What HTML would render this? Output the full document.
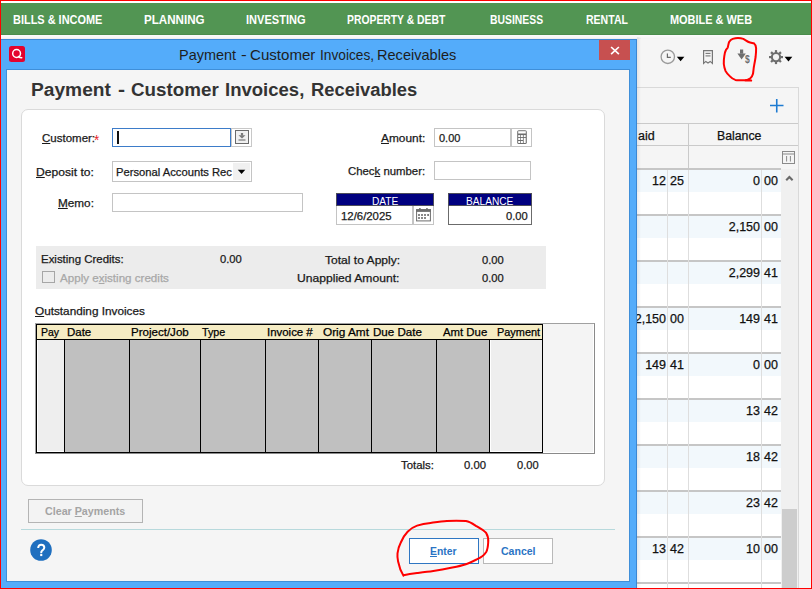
<!DOCTYPE html>
<html><head><meta charset="utf-8">
<style>
*{box-sizing:border-box;margin:0;padding:0}
html,body{width:812px;height:589px;overflow:hidden;background:#f5f5f5;font-family:"Liberation Sans",sans-serif;color:#1a1a1a;position:relative}
.a{position:absolute}
.t{position:absolute;line-height:1;white-space:pre}
.s{-webkit-text-stroke:0.25px currentColor}
u{text-decoration:underline;text-underline-offset:1px;text-decoration-thickness:1px}
</style></head><body>
<div class="a" style="left:0px;top:0px;width:812px;height:3px;background:#fff;"></div>
<div class="a" style="left:0px;top:3px;width:812px;height:32px;background:#529553;"></div>
<div class="a" style="left:0px;top:34px;width:812px;height:1px;background:#4a8c4c;"></div>
<div class="a" style="left:0px;top:35px;width:812px;height:4px;background:linear-gradient(#fbfbfb,#f3f3f3);"></div>
<div class="t" style="left:12.59px;top:13.72px;font-size:12.5px;color:#fff;transform:scaleX(0.8759);transform-origin:0 0;font-weight:700;">BILLS &amp; INCOME</div>
<div class="t" style="left:144.45px;top:13.72px;font-size:12.5px;color:#fff;transform:scaleX(0.9280);transform-origin:0 0;font-weight:700;">PLANNING</div>
<div class="t" style="left:245.68px;top:13.72px;font-size:12.5px;color:#fff;transform:scaleX(0.8837);transform-origin:0 0;font-weight:700;">INVESTING</div>
<div class="t" style="left:347.33px;top:13.72px;font-size:12.5px;color:#fff;transform:scaleX(0.8293);transform-origin:0 0;font-weight:700;">PROPERTY &amp; DEBT</div>
<div class="t" style="left:490.33px;top:13.72px;font-size:12.5px;color:#fff;transform:scaleX(0.8303);transform-origin:0 0;font-weight:700;">BUSINESS</div>
<div class="t" style="left:585.72px;top:13.72px;font-size:12.5px;color:#fff;transform:scaleX(0.8422);transform-origin:0 0;font-weight:700;">RENTAL</div>
<div class="t" style="left:670.29px;top:13.72px;font-size:12.5px;color:#fff;transform:scaleX(0.8753);transform-origin:0 0;font-weight:700;">MOBILE &amp; WEB</div>
<div class="a" style="left:600px;top:87px;width:199px;height:510px;background:#f5f5f5;border:1px solid #d9d9d9"></div>
<div class="a" style="left:600px;top:123px;width:198px;height:1px;background:#cacaca;"></div>
<div class="a" style="left:600px;top:145px;width:198px;height:1px;background:#cacaca;"></div>
<div class="a" style="left:688px;top:123px;width:1px;height:46px;background:#cacaca;"></div>
<svg class="a" style="left:769px;top:98px" width="16" height="16" viewBox="0 0 16 16"><path d="M1 7.5 H14.5 M7.75 1 V14.5" stroke="#1e7bd1" stroke-width="1.6"/></svg>
<div class="t s" style="left:717.42px;top:130.29px;font-size:12.3px;color:#111;transform:scaleX(0.9994);transform-origin:0 0;">Balance</div>
<div class="t s" style="top:130.42px;font-size:12.5px;color:#111;left:638px;">aid</div>
<svg class="a" style="left:782px;top:151px" width="13" height="13" viewBox="0 0 13 13"><rect x="0.5" y="0.5" width="12" height="12" fill="none" stroke="#8a8a8a"/><rect x="0.5" y="2.5" width="12" height="1" fill="#8a8a8a"/><line x1="4.6" y1="5" x2="4.6" y2="10.5" stroke="#8a8a8a"/><line x1="8.4" y1="5" x2="8.4" y2="10.5" stroke="#8a8a8a"/></svg>
<div class="a" style="left:600px;top:168px;width:181px;height:421px;background:#fff;"></div>
<div class="a" style="left:781px;top:169px;width:17px;height:420px;background:#f0f0f0;"></div>
<div class="a" style="left:782px;top:509px;width:15px;height:80px;background:#cdcdcd;"></div>
<svg class="a" style="left:783px;top:173px" width="12" height="10" viewBox="0 0 12 10"><polyline points="3.2,7.2 6.4,4 9.6,7.2" fill="none" stroke="#6a6a6a" stroke-width="2.1"/></svg>
<div class="a" style="left:600px;top:168px;width:181px;height:2px;background:#c6c6c6;"></div>
<div class="a" style="left:600px;top:170px;width:181px;height:22px;background:#f2f8fc;"></div>
<div class="t s" style="top:175.42px;font-size:12.5px;color:#111;right:146px;text-align:right;">12</div>
<div class="t s" style="top:175.42px;font-size:12.5px;color:#111;left:670px;">25</div>
<div class="t s" style="top:175.42px;font-size:12.5px;color:#111;right:52px;text-align:right;">0</div>
<div class="t s" style="top:175.42px;font-size:12.5px;color:#111;left:764px;">00</div>
<div class="a" style="left:600px;top:214px;width:181px;height:2px;background:#c6c6c6;"></div>
<div class="a" style="left:600px;top:216px;width:181px;height:22px;background:#f2f8fc;"></div>
<div class="t s" style="top:221.42px;font-size:12.5px;color:#111;right:52px;text-align:right;">2,150</div>
<div class="t s" style="top:221.42px;font-size:12.5px;color:#111;left:764px;">00</div>
<div class="a" style="left:600px;top:260px;width:181px;height:2px;background:#c6c6c6;"></div>
<div class="a" style="left:600px;top:262px;width:181px;height:22px;background:#f2f8fc;"></div>
<div class="t s" style="top:267.42px;font-size:12.5px;color:#111;right:52px;text-align:right;">2,299</div>
<div class="t s" style="top:267.42px;font-size:12.5px;color:#111;left:764px;">41</div>
<div class="a" style="left:600px;top:306px;width:181px;height:2px;background:#c6c6c6;"></div>
<div class="a" style="left:600px;top:308px;width:181px;height:22px;background:#f2f8fc;"></div>
<div class="t s" style="top:313.42px;font-size:12.5px;color:#111;right:146px;text-align:right;">2,150</div>
<div class="t s" style="top:313.42px;font-size:12.5px;color:#111;left:670px;">00</div>
<div class="t s" style="top:313.42px;font-size:12.5px;color:#111;right:52px;text-align:right;">149</div>
<div class="t s" style="top:313.42px;font-size:12.5px;color:#111;left:764px;">41</div>
<div class="a" style="left:600px;top:352px;width:181px;height:2px;background:#c6c6c6;"></div>
<div class="a" style="left:600px;top:354px;width:181px;height:22px;background:#f2f8fc;"></div>
<div class="t s" style="top:359.42px;font-size:12.5px;color:#111;right:146px;text-align:right;">149</div>
<div class="t s" style="top:359.42px;font-size:12.5px;color:#111;left:670px;">41</div>
<div class="t s" style="top:359.42px;font-size:12.5px;color:#111;right:52px;text-align:right;">0</div>
<div class="t s" style="top:359.42px;font-size:12.5px;color:#111;left:764px;">00</div>
<div class="a" style="left:600px;top:398px;width:181px;height:2px;background:#c6c6c6;"></div>
<div class="a" style="left:600px;top:400px;width:181px;height:22px;background:#f2f8fc;"></div>
<div class="t s" style="top:405.42px;font-size:12.5px;color:#111;right:52px;text-align:right;">13</div>
<div class="t s" style="top:405.42px;font-size:12.5px;color:#111;left:764px;">42</div>
<div class="a" style="left:600px;top:444px;width:181px;height:2px;background:#c6c6c6;"></div>
<div class="a" style="left:600px;top:446px;width:181px;height:22px;background:#f2f8fc;"></div>
<div class="t s" style="top:451.42px;font-size:12.5px;color:#111;right:52px;text-align:right;">18</div>
<div class="t s" style="top:451.42px;font-size:12.5px;color:#111;left:764px;">42</div>
<div class="a" style="left:600px;top:490px;width:181px;height:2px;background:#c6c6c6;"></div>
<div class="a" style="left:600px;top:492px;width:181px;height:22px;background:#f2f8fc;"></div>
<div class="t s" style="top:497.42px;font-size:12.5px;color:#111;right:52px;text-align:right;">23</div>
<div class="t s" style="top:497.42px;font-size:12.5px;color:#111;left:764px;">42</div>
<div class="a" style="left:600px;top:536px;width:181px;height:2px;background:#c6c6c6;"></div>
<div class="a" style="left:600px;top:538px;width:181px;height:22px;background:#f2f8fc;"></div>
<div class="t s" style="top:543.42px;font-size:12.5px;color:#111;right:146px;text-align:right;">13</div>
<div class="t s" style="top:543.42px;font-size:12.5px;color:#111;left:670px;">42</div>
<div class="t s" style="top:543.42px;font-size:12.5px;color:#111;right:52px;text-align:right;">10</div>
<div class="t s" style="top:543.42px;font-size:12.5px;color:#111;left:764px;">00</div>
<div class="a" style="left:600px;top:582px;width:181px;height:2px;background:#c6c6c6;"></div>
<div class="a" style="left:667px;top:170px;width:1px;height:419px;background:#dedede;"></div>
<div class="a" style="left:688px;top:170px;width:1px;height:419px;background:#dedede;"></div>
<div class="a" style="left:761px;top:170px;width:1px;height:419px;background:#dedede;"></div>
<svg class="a" style="left:655px;top:44px" width="145" height="28" viewBox="655 44 145 28">
<circle cx="667.8" cy="56.8" r="6.7" fill="none" stroke="#9a9a9a" stroke-width="1.3"/>
<polyline points="667.4,53.6 667.4,57.4 670.8,57.4" fill="none" stroke="#6a6a6a" stroke-width="1.2"/>
<polygon points="676.8,56.8 684.4,56.8 680.6,61.3" fill="#000"/>
<path d="M703.6,50.6 H712.4 V63.4 L710.2,61.4 L708,63 L705.8,61.4 L703.6,63.4 Z" fill="none" stroke="#777" stroke-width="1.2"/>
<line x1="705.5" y1="53.4" x2="710.5" y2="53.4" stroke="#777" stroke-width="1.1"/>
<line x1="705.5" y1="55.9" x2="710.5" y2="55.9" stroke="#777" stroke-width="1.1"/>
<rect x="740" y="49.5" width="3.2" height="4.2" fill="#6e6e6e"/>
<polygon points="737.4,53.4 745.8,53.4 741.6,59.6" fill="#6e6e6e"/>
<text x="745" y="63.3" font-family="Liberation Sans" font-size="10" font-weight="bold" fill="#6e6e6e" transform="translate(745 0) scale(0.85 1) translate(-745 0)">$</text>
<g transform="translate(776,57.1)" fill="#6e6e6e">
<circle r="5.2"/>
<rect x="-1.1" y="-7" width="2.2" height="14"/><rect x="-1.1" y="-7" width="2.2" height="14" transform="rotate(45)"/><rect x="-1.1" y="-7" width="2.2" height="14" transform="rotate(90)"/><rect x="-1.1" y="-7" width="2.2" height="14" transform="rotate(135)"/>
<circle r="3.1" fill="#f4f4f4"/>
</g>
<polygon points="784.6,56.8 792.3,56.8 788.45,61.4" fill="#000"/>
</svg>
<div class="a" style="left:637px;top:37px;width:4px;height:560px;background:linear-gradient(90deg,rgba(0,0,0,0.07),rgba(0,0,0,0));"></div>
<div class="a" style="left:1px;top:38px;width:640px;height:1px;background:linear-gradient(rgba(0,0,0,0),rgba(0,0,0,0.05));"></div>
<div class="a" style="left:1px;top:39px;width:636px;height:560px;background:#54acfa;border-top:1px solid #3b87d3;border-right:1px solid #3b87d3"></div>
<svg class="a" style="left:9px;top:46px" width="16" height="16" viewBox="0 0 16 16">
<rect x="0" y="0" width="16" height="16" rx="2.5" fill="#e4032e"/>
<circle cx="7.6" cy="7.5" r="3.9" fill="none" stroke="#fff" stroke-width="1.5"/>
<path d="M9.6,10.6 Q10.8,11.7 12.7,11.8" fill="none" stroke="#fff" stroke-width="1.6" stroke-linecap="round"/>
</svg>
<div class="a" style="left:599px;top:40px;width:31px;height:20px;background:#c75050;"></div>
<svg class="a" style="left:599px;top:40px" width="31" height="20" viewBox="0 0 31 20"><path d="M12.1,7 L19.9,14.2 M19.9,7 L12.1,14.2" stroke="#fff" stroke-width="1.7"/></svg>
<div class="t" style="left:179.34px;top:47.53px;font-size:14.5px;color:#1e1e1e;transform:scaleX(0.9970);transform-origin:0 0;">Payment</div>
<div class="t" style="left:241.13px;top:47.53px;font-size:14.5px;color:#1e1e1e;transform:scaleX(1.1823);transform-origin:0 0;">-</div>
<div class="t" style="left:250.35px;top:47.53px;font-size:14.5px;color:#1e1e1e;transform:scaleX(1.0397);transform-origin:0 0;">Customer</div>
<div class="t" style="left:319.77px;top:47.53px;font-size:14.5px;color:#1e1e1e;transform:scaleX(0.9458);transform-origin:0 0;">Invoices,</div>
<div class="t" style="left:377.04px;top:47.53px;font-size:14.5px;color:#1e1e1e;transform:scaleX(1.0041);transform-origin:0 0;">Receivables</div>
<div class="a" style="left:6px;top:69px;width:624px;height:513px;background:#f5f5f5;border:1px solid #3f8fd9"></div>
<div class="t" style="left:31.45px;top:80.76px;font-size:18px;color:#333;transform:scaleX(1.0649);transform-origin:0 0;font-weight:700;">Payment</div>
<div class="t" style="left:118.25px;top:80.76px;font-size:18px;color:#333;transform:scaleX(1.1765);transform-origin:0 0;font-weight:700;">-</div>
<div class="t" style="left:131.15px;top:80.76px;font-size:18px;color:#333;transform:scaleX(1.0437);transform-origin:0 0;font-weight:700;">Customer</div>
<div class="t" style="left:224.80px;top:80.76px;font-size:18px;color:#333;transform:scaleX(1.0294);transform-origin:0 0;font-weight:700;">Invoices,</div>
<div class="t" style="left:311.01px;top:80.76px;font-size:18px;color:#333;transform:scaleX(1.0201);transform-origin:0 0;font-weight:700;">Receivables</div>
<div class="a" style="left:21px;top:109px;width:584px;height:377px;background:#fff;border:1px solid #dadada;border-radius:7px"></div>
<div class="t s" style="left:41.63px;top:133.29px;font-size:11px;color:#1a1a1a;transform:scaleX(1.0454);transform-origin:0 0;"><u>C</u>ustomer:</div>
<div class="t" style="left:93.90px;top:133.45px;font-size:14px;color:#e8262a;transform:scaleX(0.9722);transform-origin:0 0;">*</div>
<div class="t s" style="left:36.33px;top:166.59px;font-size:11px;color:#1a1a1a;transform:scaleX(1.1004);transform-origin:0 0;"><u>D</u>eposit to:</div>
<div class="t s" style="left:58.26px;top:198.19px;font-size:11px;color:#1a1a1a;transform:scaleX(1.0682);transform-origin:0 0;"><u>M</u>emo:</div>
<div class="a" style="left:112px;top:128px;width:119px;height:19px;background:#fff;border:1px solid #3d7cc9"></div>
<div class="a" style="left:117px;top:131px;width:1.5px;height:13px;background:#111;"></div>
<div class="a" style="left:231px;top:128px;width:21px;height:19px;background:#fff;border:1px solid #c8c8c8"></div>
<svg class="a" style="left:231px;top:128px" width="21" height="19" viewBox="0 0 21 19"><rect x="4.5" y="2.5" width="13" height="13" fill="#f0f0f0" stroke="#6a6a6a"/><rect x="9.9" y="5" width="2.2" height="2.5" fill="#7a7a7a"/><polygon points="7.5,7.3 14.5,7.3 11,10.6" fill="#7a7a7a"/><rect x="7.5" y="11.4" width="7" height="1.2" fill="#7a7a7a"/></svg>
<div class="a" style="left:112px;top:161px;width:140px;height:21px;background:#fff;border:1px solid #c4c4c4"></div>
<div class="t s" style="left:115.50px;top:167.29px;font-size:11px;color:#1a1a1a;transform:scaleX(1.0197);transform-origin:0 0;">Personal Accounts Rec</div>
<div class="a" style="left:233px;top:163px;width:17px;height:17px;background:#f0f0f0;"></div>
<svg class="a" style="left:233px;top:163px" width="17" height="17" viewBox="0 0 17 17"><polygon points="4.8,6.8 12.3,6.8 8.55,11" fill="#000"/></svg>
<div class="a" style="left:112px;top:193px;width:191px;height:19px;background:#fff;border:1px solid #c4c4c4"></div>
<div class="t s" style="left:381.00px;top:132.89px;font-size:11px;color:#1a1a1a;transform:scaleX(1.0794);transform-origin:0 0;"><u>A</u>mount:</div>
<div class="a" style="left:434px;top:128px;width:98px;height:19px;background:#fff;border:1px solid #c4c4c4"></div>
<div class="t s" style="top:132.69px;font-size:11px;color:#1a1a1a;left:439px;">0.00</div>
<div class="a" style="left:510px;top:129px;width:2px;height:17px;background:#c4c4c4;"></div>
<svg class="a" style="left:500px;top:124px" width="40" height="26" viewBox="0 0 40 26"><rect x="17.2" y="6.2" width="9.6" height="13.8" rx="1.6" fill="#6d6d6d"/><g fill="#fff"><rect x="18.2" y="7.2" width="7.6" height="2.3"/><rect x="18.2" y="11.1" width="2" height="2"/><rect x="20.9" y="11.1" width="2" height="2"/><rect x="23.7" y="11.1" width="2" height="2"/><rect x="18.2" y="14" width="2" height="2"/><rect x="20.9" y="14" width="2" height="2"/><rect x="18.2" y="17" width="2" height="2"/><rect x="20.9" y="17" width="2" height="2"/><rect x="23.7" y="14" width="2" height="5"/></g></svg>
<div class="t s" style="left:348.03px;top:166.19px;font-size:11px;color:#1a1a1a;transform:scaleX(1.0337);transform-origin:0 0;">Chec<u>k</u> number:</div>
<div class="a" style="left:434px;top:161px;width:97px;height:19px;background:#fff;border:1px solid #c4c4c4"></div>
<div class="a" style="left:336px;top:193px;width:98px;height:13px;background:#000080;border:1px solid #4d4d5a"></div>
<div class="t" style="left:371.69px;top:196.29px;font-size:11px;color:#fff;transform:scaleX(0.9238);transform-origin:0 0;">DATE</div>
<div class="a" style="left:336px;top:206px;width:98px;height:19px;background:#fff;border:1px solid #c4c4c4;border-top:none"></div>
<div class="t s" style="left:340.55px;top:210.59px;font-size:11px;color:#1a1a1a;transform:scaleX(1.0339);transform-origin:0 0;">12/6/2025</div>
<div class="a" style="left:412px;top:206px;width:2px;height:19px;background:#c4c4c4;"></div>
<svg class="a" style="left:405px;top:200px" width="35" height="30" viewBox="0 0 35 30"><rect x="11.6" y="9.7" width="13.8" height="11.2" fill="#fff" stroke="#6d6d6d"/><rect x="11.1" y="9.2" width="14.8" height="2.7" fill="#6d6d6d"/><rect x="14" y="8" width="1.7" height="2" rx="0.6" fill="#6d6d6d"/><rect x="21.1" y="8" width="1.7" height="2" rx="0.6" fill="#6d6d6d"/><g fill="#6d6d6d"><rect x="13.1" y="14.1" width="1.8" height="1.8"/><rect x="16.1" y="14.1" width="1.8" height="1.8"/><rect x="19.1" y="14.1" width="1.8" height="1.8"/><rect x="22.2" y="14.1" width="1.8" height="1.8"/><rect x="13.1" y="17.1" width="1.8" height="1.8"/><rect x="16.1" y="17.1" width="1.8" height="1.8"/><rect x="19.1" y="17.1" width="1.8" height="1.8"/></g></svg>
<div class="a" style="left:448px;top:193px;width:84px;height:13px;background:#000080;border:1px solid #4d4d5a"></div>
<div class="t" style="left:465.69px;top:196.29px;font-size:11px;color:#fff;transform:scaleX(0.9221);transform-origin:0 0;">BALANCE</div>
<div class="a" style="left:448px;top:206px;width:84px;height:19px;background:#fff;border:1px solid #6b6b6b;border-top:none"></div>
<div class="t s" style="left:505.55px;top:210.59px;font-size:11px;color:#1a1a1a;transform:scaleX(1.0160);transform-origin:0 0;">0.00</div>
<div class="a" style="left:36px;top:246px;width:510px;height:43px;background:#ececec;"></div>
<div class="t s" style="left:41.38px;top:254.29px;font-size:11px;color:#1a1a1a;transform:scaleX(1.0406);transform-origin:0 0;">Existing Credits:</div>
<div class="t s" style="left:219.75px;top:254.29px;font-size:11px;color:#1a1a1a;transform:scaleX(1.0209);transform-origin:0 0;">0.00</div>
<div class="a" style="left:42px;top:271px;width:13px;height:12px;background:#ececec;border:1px solid #a6a6a6"></div>
<div class="t s" style="left:60.20px;top:273.49px;font-size:11px;color:#a8a8a8;transform:scaleX(1.0538);transform-origin:0 0;">Apply e<u>x</u>isting credits</div>
<div class="t s" style="left:324.66px;top:254.59px;font-size:11px;color:#1a1a1a;transform:scaleX(1.0972);transform-origin:0 0;">Total to Apply:</div>
<div class="t s" style="left:482.45px;top:254.59px;font-size:11px;color:#1a1a1a;transform:scaleX(1.0160);transform-origin:0 0;">0.00</div>
<div class="t s" style="left:297.39px;top:273.49px;font-size:11px;color:#1a1a1a;transform:scaleX(1.1017);transform-origin:0 0;">Unapplied Amount:</div>
<div class="t s" style="left:482.45px;top:273.49px;font-size:11px;color:#1a1a1a;transform:scaleX(1.0160);transform-origin:0 0;">0.00</div>
<div class="t s" style="left:35.07px;top:306.49px;font-size:11px;color:#1a1a1a;transform:scaleX(1.0691);transform-origin:0 0;"><u>O</u>utstanding Invoices</div>
<div class="a" style="left:35px;top:323px;width:560px;height:131px;background:#f4f4f4;border-top:1px solid #a0a0a0;border-left:1px solid #a0a0a0;border-right:1px solid #8a8a8a;border-bottom:1px solid #8a8a8a;box-shadow:inset -1px -1px 0 #fff"></div>
<div class="a" style="left:36px;top:324px;width:507px;height:129px;background:#c0c0c0;border:1px solid #000"></div>
<div class="a" style="left:37px;top:325px;width:505px;height:14px;background:#f5ecc4;"></div>
<div class="a" style="left:37px;top:339px;width:505px;height:1px;background:#000;"></div>
<div class="a" style="left:37px;top:340px;width:27px;height:112px;background:#eeeeee;border-left:1px solid #fff;border-bottom:1px solid #fff"></div>
<div class="a" style="left:490px;top:340px;width:52px;height:112px;background:#eeeeee;border-left:1px solid #fff;border-bottom:1px solid #fff"></div>
<div class="a" style="left:64px;top:340px;width:1px;height:112px;background:#000;"></div>
<div class="a" style="left:129px;top:340px;width:1px;height:112px;background:#000;"></div>
<div class="a" style="left:200px;top:340px;width:1px;height:112px;background:#000;"></div>
<div class="a" style="left:265px;top:340px;width:1px;height:112px;background:#000;"></div>
<div class="a" style="left:318px;top:340px;width:1px;height:112px;background:#000;"></div>
<div class="a" style="left:371px;top:340px;width:1px;height:112px;background:#000;"></div>
<div class="a" style="left:436px;top:340px;width:1px;height:112px;background:#000;"></div>
<div class="a" style="left:489px;top:340px;width:1px;height:112px;background:#000;"></div>
<div class="t s" style="left:41.46px;top:327.29px;font-size:11px;color:#000;transform:scaleX(0.9505);transform-origin:0 0;">Pay</div>
<div class="t s" style="left:66.98px;top:327.29px;font-size:11px;color:#000;transform:scaleX(1.0442);transform-origin:0 0;">Date</div>
<div class="t s" style="left:131.38px;top:327.29px;font-size:11px;color:#000;transform:scaleX(1.0488);transform-origin:0 0;">Project/Job</div>
<div class="t s" style="left:202.49px;top:327.29px;font-size:11px;color:#000;transform:scaleX(0.9740);transform-origin:0 0;">Type</div>
<div class="t s" style="left:267.07px;top:327.29px;font-size:11px;color:#000;transform:scaleX(1.0383);transform-origin:0 0;">Invoice #</div>
<div class="t s" style="left:322.87px;top:327.29px;font-size:11px;color:#000;transform:scaleX(1.0738);transform-origin:0 0;">Orig Amt</div>
<div class="t s" style="left:373.07px;top:327.29px;font-size:11px;color:#000;transform:scaleX(1.0532);transform-origin:0 0;">Due Date</div>
<div class="t s" style="left:443.00px;top:327.29px;font-size:11px;color:#000;transform:scaleX(1.0332);transform-origin:0 0;">Amt Due</div>
<div class="t s" style="left:496.63px;top:327.29px;font-size:11px;color:#000;transform:scaleX(0.9915);transform-origin:0 0;">Payment</div>
<div class="t s" style="left:400.57px;top:460.09px;font-size:11px;color:#1a1a1a;transform:scaleX(1.0352);transform-origin:0 0;">Totals:</div>
<div class="t s" style="left:464.45px;top:460.09px;font-size:11px;color:#1a1a1a;transform:scaleX(1.0258);transform-origin:0 0;">0.00</div>
<div class="t s" style="left:516.66px;top:460.09px;font-size:11px;color:#1a1a1a;transform:scaleX(1.0063);transform-origin:0 0;">0.00</div>
<div class="a" style="left:28px;top:499px;width:115px;height:24px;background:#f3f3f3;border:1px solid #b4b4b4"></div>
<div class="t" style="left:44.87px;top:506.09px;font-size:11px;color:#a4a4a4;transform:scaleX(0.9721);transform-origin:0 0;font-weight:700;">Clear <u>P</u>ayments</div>
<div class="a" style="left:21px;top:529px;width:594px;height:1px;background:#b7d9dc;"></div>
<svg class="a" style="left:30px;top:539px" width="22" height="22" viewBox="0 0 22 22"><circle cx="11" cy="11" r="10.8" fill="#1f6fbf"/><path d="M8.2,9 C8.2,6.9 9.6,5.7 11.2,5.7 C13,5.7 14.3,7 14.3,8.6 C14.3,10.4 12.8,11 12,11.8 C11.3,12.4 11.2,13 11.2,14.2" fill="none" stroke="#fff" stroke-width="2"/><rect x="10.2" y="15" width="2.1" height="2.1" fill="#fff"/></svg>
<div class="a" style="left:409px;top:538px;width:70px;height:26px;background:#fff;border:1px solid #2f76c2"></div>
<div class="t" style="left:430.13px;top:546.29px;font-size:11px;color:#2a74c4;transform:scaleX(0.9440);transform-origin:0 0;font-weight:700;"><u>E</u>nter</div>
<div class="a" style="left:483px;top:538px;width:70px;height:26px;background:#fff;border:1px solid #b9b9b9"></div>
<div class="t" style="left:500.98px;top:546.29px;font-size:11px;color:#2a74c4;transform:scaleX(0.9578);transform-origin:0 0;font-weight:700;">Cancel</div>
<svg class="a" style="left:0;top:0" width="812" height="589" viewBox="0 0 812 589">
<path d="M751.2,80.6 L745,80.2 C741,80.2 737,80.1 735.3,79.9 C732.5,79 731,77.5 730,76.4 C727.5,74 726.3,72.5 725.6,71.1 C724.4,68 724,66 723.8,64 C723.7,61 724,58 724.3,56.1 C724.8,53 725.3,51 726,49.9 C727,48.6 727.5,48 727.8,47.3 C728.3,45 728.6,43 729.1,42 C730.2,40.2 731.5,39.3 732.7,38.9 C734.5,38.3 736.3,38 738,38 C740,38 742,38.4 743.3,38.9 C745.5,40 747,41.3 748.6,42 C750.5,42.8 752.5,42.9 753.9,43.3 C755.4,44.5 756,46.5 756.1,48.1 C756.2,51 755.9,54 755.6,57 C755.1,60.5 754.5,63.5 753.9,66.7 C753.5,69.5 753.3,71.8 753,73.8 C752.5,76 751.5,77.2 750.3,78.2 C748.8,79.3 747,80 745,80.4" fill="none" stroke="#f00" stroke-width="2" stroke-linecap="round" stroke-linejoin="round"/>
<path d="M403.5,575.7 C400.5,571 399,566 398.1,561.5 C397.4,558.5 397.3,555.5 397.5,553.3 C398,549 399.2,545.5 400.8,542.5 C402.5,538.5 404.8,534.5 407.6,531.7 C410.5,528.8 413.5,526.8 417.1,525.6 C421.5,524.2 426,523.4 430.6,522.9 C436,522.2 441.5,521.4 446.9,521.1 C453,520.8 459.5,520.8 465.9,521.1 C470,521.8 473.5,524.3 476.7,526.3 C480.5,528.5 484,530.5 486.2,533 C488,536 488.5,539.5 488.2,542.5 C488,546 487.6,549.5 486.2,552 C484,555.5 480.5,557.8 476.7,559.4 C473,561.3 469.8,563 465.9,564.2 C461.5,565.6 457,566.6 452.3,567.6 C446,568.9 439.5,570.1 433.3,571 C428,571.8 422.5,572.4 417.1,573 C412.5,573.6 408,574.3 403.5,575.3" fill="none" stroke="#f00" stroke-width="2" stroke-linecap="round" stroke-linejoin="round"/>
</svg>
<div class="a" style="left:0px;top:0px;width:812px;height:1px;background:#f00;"></div>
<div class="a" style="left:0px;top:0px;width:1px;height:589px;background:#f00;"></div>
<div class="a" style="left:811px;top:0px;width:1px;height:589px;background:#f00;"></div>
<div class="a" style="left:0px;top:588px;width:812px;height:1px;background:#f00;"></div>
</body></html>
